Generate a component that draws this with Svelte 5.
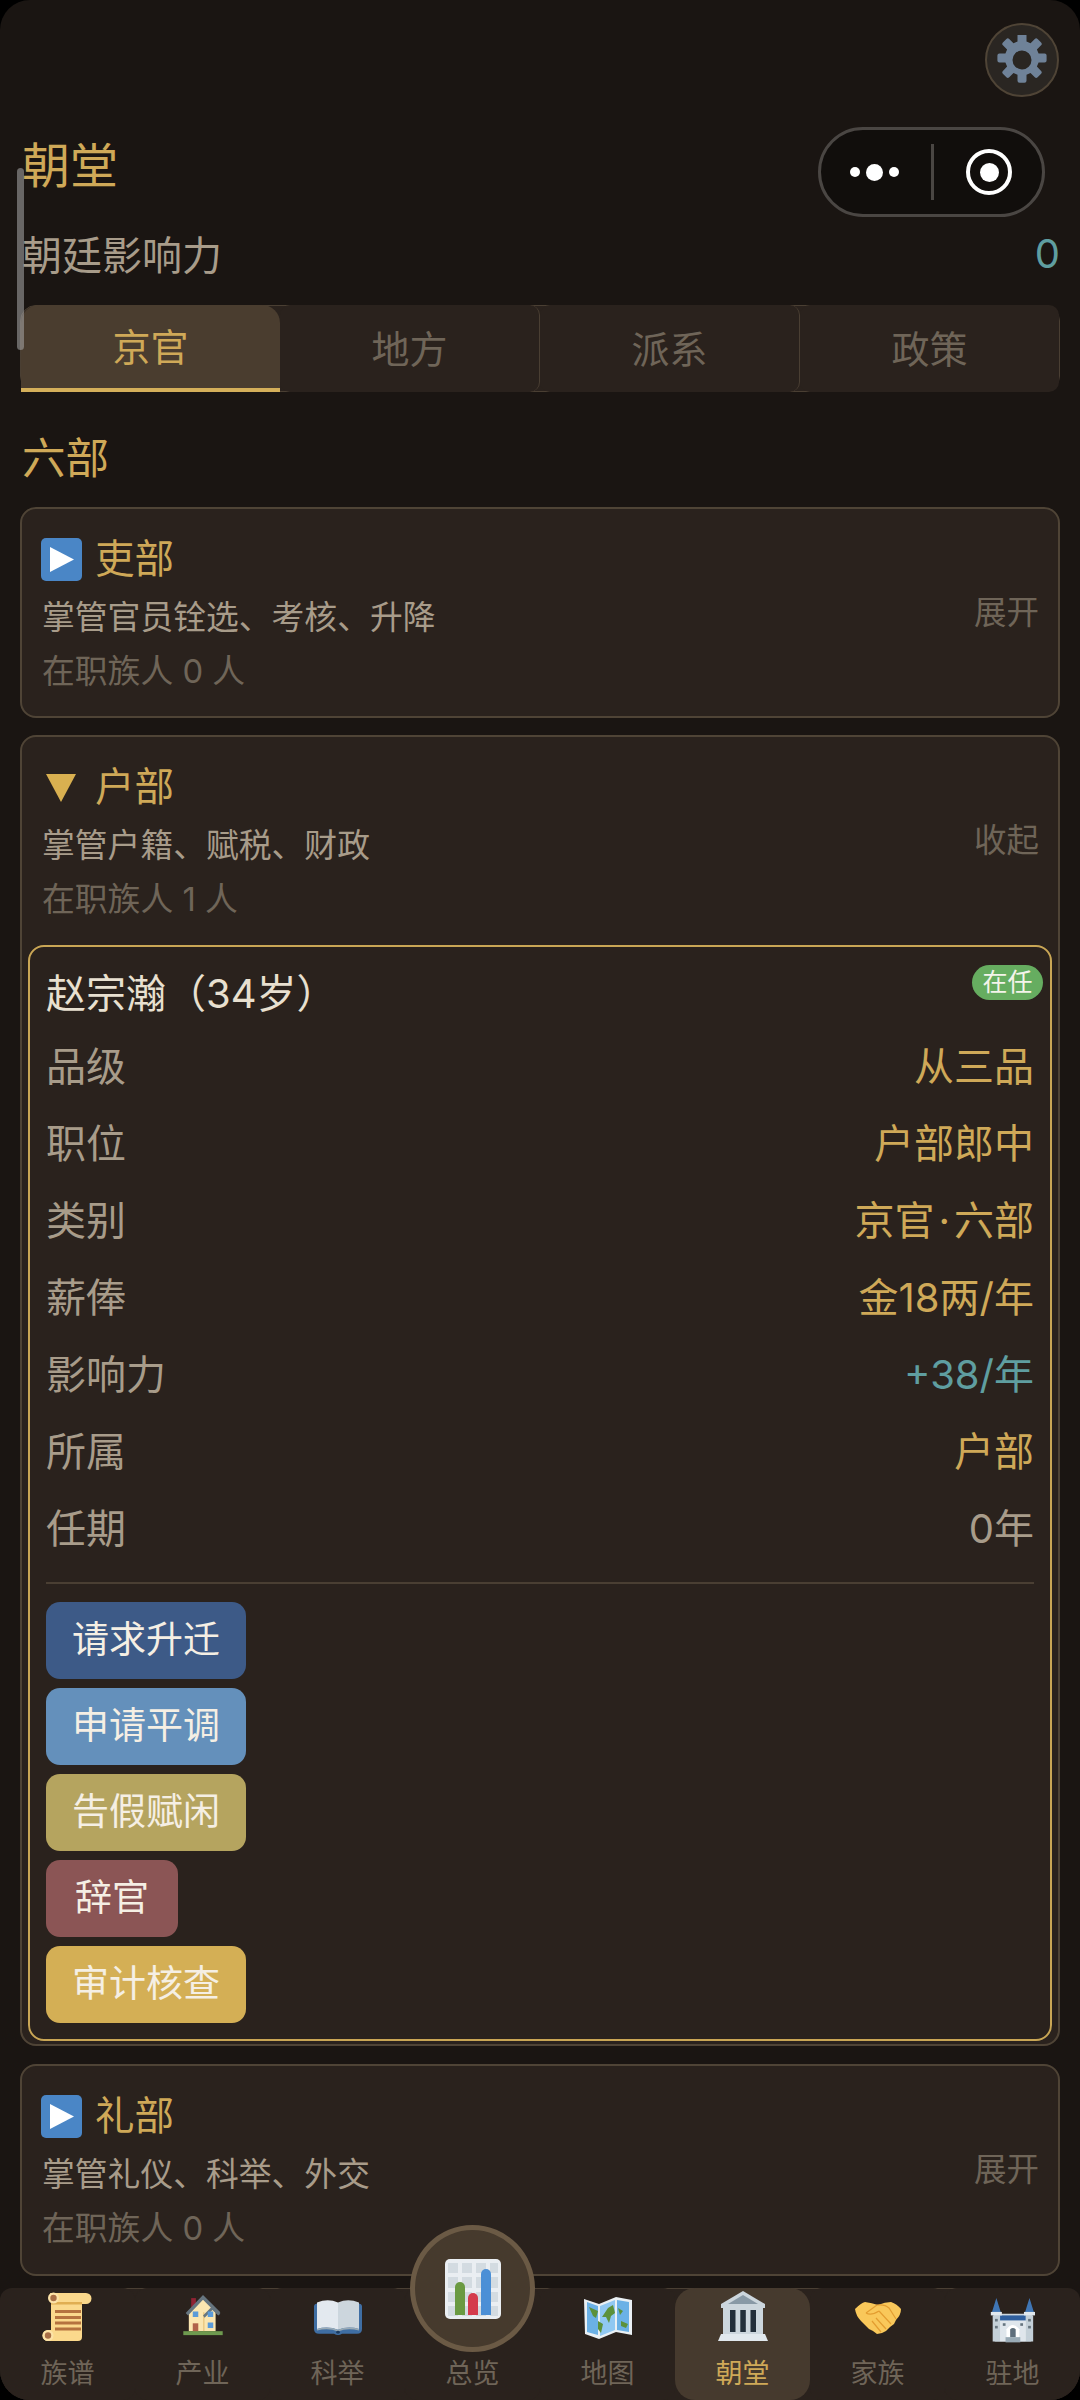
<script>
  const tabs = ['京官', '地方', '派系', '政策'];
  const rows = [
    { k: '品级', v: ['从三品'], c: 'gold' },
    { k: '职位', v: ['户部郎中'], c: 'gold' },
    { k: '类别', v: ['京官', '六部'], c: 'gold' },
    { k: '薪俸', v: ['金18两/年'], c: 'gold' },
    { k: '影响力', v: ['+38/年'], c: 'teal' },
    { k: '所属', v: ['户部'], c: 'gold' },
    { k: '任期', v: ['0年'], c: 'plain' }
  ];
  const actions = [
    { t: '请求升迁', c: 'navy' },
    { t: '申请平调', c: 'sky' },
    { t: '告假赋闲', c: 'olive' },
    { t: '辞官', c: 'wine short' },
    { t: '审计核查', c: 'amber' }
  ];
  const nav = [
    { t: '族谱', i: 'scroll' },
    { t: '产业', i: 'house' },
    { t: '科举', i: 'book' },
    { t: '总览', i: 'chart' },
    { t: '地图', i: 'map' },
    { t: '朝堂', i: 'bank' },
    { t: '家族', i: 'shake' },
    { t: '驻地', i: 'castle' }
  ];
</script>

{#snippet play()}
  <svg class="mark" viewBox="0 0 41 43"><rect width="41" height="43" rx="5" fill="#4a86c6" /><path d="M9 9 L33 21.5 L9 34 Z" fill="#fff" /></svg>
{/snippet}

{#snippet down()}
  <svg class="mark" viewBox="0 0 41 43"><path d="M5 8 H35 L20 36 Z" fill="#d9b050" /></svg>
{/snippet}

{#snippet icon(name)}
  {#if name === 'scroll'}
    <svg class="ni" viewBox="0 0 52 52">
      <path d="M8 2 H44 a5.500 5.500 0 0 1 0 11 H40 V46 a4 4 0 0 1 -4 4 H6 a5.500 5.500 0 0 1 0 -11 H9 V6 Z" fill="#fbd98c" />
      <rect x="9" y="11" width="31" height="2.500" fill="#e0ae52" />
      <circle cx="11.500" cy="7" r="5.500" fill="#fde3a7" /><circle cx="11.500" cy="7" r="3.200" fill="#a86f46" />
      <circle cx="6" cy="44.500" r="5.500" fill="#fde3a7" /><circle cx="6" cy="44.500" r="3.200" fill="#a86f46" />
      <g fill="#b5733f"><rect x="13" y="19" width="26" height="3" /><rect x="13" y="25" width="26" height="3" /><rect x="13" y="30.500" width="26" height="3" /><rect x="13" y="36.500" width="26" height="3" /></g>
    </svg>
  {:else if name === 'house'}
    <svg class="ni" viewBox="-7 -5 66 66">
      <rect x="11" y="4" width="6" height="12" fill="#8f2233" />
      <path d="M8 20 L26 3 L42 18 V46 H8 Z" fill="#fbe6b0" />
      <rect x="26" y="22" width="2" height="24" fill="#eccb86" />
      <path d="M4 23 L26 0 L48 22 L45 25 L26 6 L7 26 Z" fill="#66757f" />
      <path d="M26 26 L38 14 L48 24 L45.500 26 L38 19 L28 29 Z" fill="#66757f" />
      <rect x="13" y="21" width="7" height="7" fill="#5b9bd8" /><rect x="32" y="21" width="7" height="7" fill="#5b9bd8" /><rect x="32" y="35" width="7" height="7" fill="#5b9bd8" />
      <rect x="13" y="36" width="7" height="11" fill="#b0624a" />
      <rect x="1" y="46" width="50" height="5" fill="#6e9a4f" />
    </svg>
  {:else if name === 'book'}
    <svg class="ni" viewBox="0 0 52 52">
      <g transform="translate(0 6) scale(1 .8)">
        <path d="M2 12 Q2 8 6 8 H46 Q50 8 50 12 V40 Q50 46 45 46 H30 Q26 49 22 46 H7 Q2 46 2 40 Z" fill="#3f6ea3" />
        <path d="M5 7 Q16 1 26 7 V41 Q16 36 5 40 Z" fill="#e3e9ef" />
        <path d="M47 7 Q36 1 26 7 V41 Q36 36 47 40 Z" fill="#ccd6dd" />
        <path d="M5 40 Q16 36 26 41 L26 43 Q16 38 5 42 Z" fill="#99aab5" /><path d="M47 40 Q36 36 26 41 L26 43 Q36 38 47 42 Z" fill="#99aab5" />
        <circle cx="26" cy="44" r="1.800" fill="#1c3a5e" />
      </g>
    </svg>
  {:else if name === 'chart'}
    <svg class="nc" viewBox="0 0 56 60">
      <rect width="56" height="60" rx="5" fill="#eaeef2" />
      <g fill="#d3dbe1"><rect x="3" y="4" width="10" height="10" /><rect x="17" y="4" width="10" height="10" /><rect x="31" y="4" width="10" height="10" /><rect x="45" y="4" width="8" height="10" /><rect x="3" y="18" width="10" height="11" /><rect x="17" y="18" width="10" height="11" /><rect x="31" y="18" width="10" height="11" /><rect x="45" y="18" width="8" height="11" /><rect x="3" y="33" width="10" height="10" /><rect x="17" y="33" width="10" height="10" /><rect x="31" y="33" width="10" height="10" /><rect x="45" y="33" width="8" height="10" /><rect x="3" y="47" width="10" height="10" /><rect x="17" y="47" width="10" height="10" /><rect x="31" y="47" width="10" height="10" /><rect x="45" y="47" width="8" height="10" /></g>
      <path d="M10 56 V28 a5 5 0 0 1 10 0 V56 Z" fill="#6a9a42" />
      <path d="M23 56 V39 a5 5 0 0 1 10 0 V56 Z" fill="#d43b4c" />
      <path d="M36 56 V15 a5 5 0 0 1 10 0 V56 Z" fill="#4b8fd6" />
    </svg>
  {:else if name === 'map'}
    <svg class="ni" viewBox="0 0 52 52">
      <path d="M2 8 L17 13 L34 6 L50 9 V44 L34 41 L17 48 L3 43 Z" fill="#eaf0f4" />
      <path d="M5 11 L16 15 V44 L5 41 Z" fill="#6bb1e6" /><path d="M18 15 L33 9 V39 L18 45 Z" fill="#90c8f2" /><path d="M35 9 L47 11 V41 L35 39 Z" fill="#6bb1e6" />
      <path d="M7 16 L16 20 L14 27 L11 25 Z M16 30 L21 33 L19 42 L16 38 Z M20 26 L26 17 L31 14 L33 22 L29 25 L27 32 L24 26 Z M36 17 L41 20 L38 24 Z M39 30 L46 33 L44 37 L39 35 Z" fill="#5c913b" />
    </svg>
  {:else if name === 'bank'}
    <svg class="ni" viewBox="0 0 52 52">
      <path d="M26 0 L48 13 V17 H4 V13 Z" fill="#ccd6dd" /><path d="M26 4 L41 13 H11 Z" fill="#8899a6" />
      <rect x="6" y="17" width="40" height="26" fill="#ccd6dd" />
      <g fill="#232f3b"><rect x="13" y="19" width="5.500" height="22" /><rect x="23.300" y="19" width="5.500" height="22" /><rect x="33.500" y="19" width="5.500" height="22" /></g>
      <path d="M4 43 H48 L51 50 H1 Z" fill="#e1e8ed" />
    </svg>
  {:else if name === 'shake'}
    <svg class="ni" viewBox="0 0 52 52">
      <path d="M3 18 Q9 12 13 11 Q20 12 26 14 Q33 11 39 11 Q45 13 49 18 Q49 24 44 29 L42 33 L38 36 L34 40 L30 42 L25 43 L21 40 L17 38 L13 34 L9 30 Q4 25 3 18 Z" fill="#f9c85a" />
      <path d="M14 22 L25 14 Q33 13 37 17 L44 28 M27 20 L39 33 M24 27 L34 38 M20 30 L29 41 M14 22 Q19 25 27 20" fill="none" stroke="#e39d30" stroke-width="1.200" />
    </svg>
  {:else}
    <svg class="ni" viewBox="0 0 52 52">
      <g transform="translate(2 7) scale(.92 .87)">
        <rect x="5" y="18" width="42" height="32" rx="2" fill="#ccd6dd" />
        <rect x="12" y="20" width="28" height="6" fill="#2f5f9e" />
        <path d="M3 17 L8 0 L13 17 Z M39 17 L44 0 L49 17 Z" fill="#3f76b5" />
        <rect x="2" y="16" width="12" height="4" fill="#e1e8ed" /><rect x="38" y="16" width="12" height="4" fill="#e1e8ed" />
        <rect x="4" y="20" width="8" height="30" fill="#c4d0d8" /><rect x="40" y="20" width="8" height="30" fill="#c4d0d8" />
        <rect x="12" y="26" width="28" height="24" fill="#dfe6ec" />
        <path d="M19 50 V36 Q26 26 33 36 V50 Z" fill="#fff" /><path d="M23 45 V36 Q26 33 29 36 V45 Z" fill="#5f6f7c" />
        <rect x="18" y="45" width="16" height="6" fill="#99aab5" />
        <g fill="#66757f"><rect x="6.500" y="24" width="3" height="3" /><rect x="42.500" y="24" width="3" height="3" /><rect x="6.500" y="32" width="3" height="3" /><rect x="42.500" y="32" width="3" height="3" /><rect x="15" y="29" width="3" height="3" /><rect x="34" y="29" width="3" height="3" /></g>
      </g>
    </svg>
  {/if}
{/snippet}

{#snippet dept(name, desc, count, open, action)}
  <div class="head">
    <div class="info">
      <div class="dname">{#if open}{@render down()}{:else}{@render play()}{/if}<span>{name}</span></div>
      <div class="desc">{desc}</div>
      <div class="count">在职族人 {count} 人</div>
    </div>
    <div class="toggle">{action}</div>
  </div>
{/snippet}

<div class="screen">
  <main class="page">
    <h1>朝堂</h1>
    <div class="power"><span>朝廷影响力</span><b>0</b></div>
    <div class="tabs">
      {#each tabs as t, i}
        <div class="tab" class:on={i === 0}><span>{t}</span></div>
      {/each}
    </div>
    <h2>六部</h2>

    <section class="card">
      {@render dept('吏部', '掌管官员铨选、考核、升降', 0, false, '展开')}
    </section>

    <section class="card open">
      {@render dept('户部', '掌管户籍、赋税、财政', 1, true, '收起')}
      <div class="person">
        <div class="pname">赵宗瀚（34岁）</div>
        <span class="chip">在任</span>
        {#each rows as r}
          <div class="row"><span>{r.k}</span><span class={r.c}>{#each r.v as part, i}{#if i > 0}<span class="dot">·</span>{/if}{part}{/each}</span></div>
        {/each}
        <div class="acts">
          {#each actions as a}
            <div class="act {a.c}">{a.t}</div>
          {/each}
        </div>
      </div>
    </section>

    <section class="card last">
      {@render dept('礼部', '掌管礼仪、科举、外交', 0, false, '展开')}
    </section>
  </main>

  <div class="thumb"></div>

  <button class="gear" aria-label="设置">
    <svg viewBox="0 0 50 50" width="50" height="50">
      <path fill="#6f8298" fill-rule="evenodd" d="M20.500 0.500 a2 2 0 0 1 2 -2 h5 a2 2 0 0 1 2 2 v6 l4 1.700 4.300 -4.200 a2 2 0 0 1 2.800 0 l3.500 3.500 a2 2 0 0 1 0 2.800 l-4.200 4.300 1.700 4 h6 a2 2 0 0 1 2 2 v5 a2 2 0 0 1 -2 2 h-6 l-1.700 4 4.200 4.300 a2 2 0 0 1 0 2.800 l-3.500 3.500 a2 2 0 0 1 -2.800 0 l-4.300 -4.200 -4 1.700 v6 a2 2 0 0 1 -2 2 h-5 a2 2 0 0 1 -2 -2 v-6 l-4 -1.700 -4.300 4.200 a2 2 0 0 1 -2.800 0 l-3.500 -3.500 a2 2 0 0 1 0 -2.800 l4.200 -4.300 -1.700 -4 h-6 a2 2 0 0 1 -2 -2 v-5 a2 2 0 0 1 2 -2 h6 l1.700 -4 -4.200 -4.300 a2 2 0 0 1 0 -2.800 l3.500 -3.500 a2 2 0 0 1 2.800 0 l4.300 4.200 4 -1.700 Z M25 15.500 a9.500 9.500 0 1 0 0 19 a9.500 9.500 0 1 0 0 -19 Z" />
    </svg>
  </button>

  <div class="capsule">
    <div class="dots"><i></i><i class="big"></i><i></i></div>
    <div class="sep"></div>
    <div class="target"><i></i></div>
  </div>

  <nav>
    {#each nav as n}
      <div class="item" class:on={n.t === '朝堂'} class:mid={n.t === '总览'}>
        {#if n.t === '总览'}
          <div class="bubble">{@render icon(n.i)}</div>
          <div class="slot"></div>
        {:else}
          <div class="slot">{@render icon(n.i)}</div>
        {/if}
        <span>{n.t}</span>
      </div>
    {/each}
  </nav>
</div>

<style>
  :global(body) { margin: 0; background: #000; }
  .screen {
    position: relative;
    width: 1080px;
    height: 2400px;
    overflow: hidden;
    border-radius: 30px;
    background: #1a1512;
    font-family: Inter, "Noto Sans CJK SC", "Noto Sans", sans-serif;
    color: #a89c8a;
  }
  .page { padding: 131px 20px 0; }
  h1 { margin: 0 0 0 2px; font-size: 48px; line-height: 70px; font-weight: 400; color: #cfa958; }
  .power { display: flex; justify-content: space-between; align-items: center; height: 60px; margin-top: 22px; font-size: 40px; color: #a89c8a; }
  .power span { margin-left: 2px; }
  .power b { font-weight: 400; color: #5f9ea0; }
  .tabs { display: flex; height: 87px; margin-top: 22px; box-sizing: border-box; border: 1px solid #4a3f33; border-radius: 16px; background: #2a221d; }
  .tab { flex: 1; display: flex; align-items: center; justify-content: center; margin: -1px 0; background: #2a221d; border-radius: 10px; font-size: 38px; color: #6f6558; border-right: 1px solid #4a3f33; box-sizing: border-box; }
  .tab span { padding-bottom: 5px; }
  .tab:last-child { border-right: 0; }
  .tab.on { background: #4a3d2f; color: #cfa958; border-bottom: 4px solid #d4af5a; border-radius: 18px 18px 0 0; border-right: 0; }
  h2 { margin: 36px 0 0 2px; font-size: 43.500px; line-height: 60px; font-weight: 400; color: #cfa958; }
  .card { box-sizing: border-box; margin-top: 19px; height: 211px; background: #2a221d; border: 2px solid #4f4436; border-radius: 16px; }
  .card.open { height: 1311px; margin-top: 17px; }
  .card.last { height: 212px; margin-top: 18px; }
  .head { display: flex; justify-content: space-between; padding: 0 19px; }
  .info { padding-top: 28px; }
  .dname { display: flex; align-items: center; height: 44px; font-size: 39.500px; color: #cfa958; gap: 13px; }
  .dname span { line-height: 44px; }
  .mark { width: 41px; height: 43px; flex: none; }
  .desc { margin-top: 13px; margin-left: 1px; font-size: 32.800px; line-height: 46px; color: #a89c8a; }
  .count { margin-top: 8px; margin-left: 1px; font-size: 32.800px; line-height: 46px; color: #6f6558; }
  .toggle { margin-top: 81px; font-size: 32.500px; line-height: 46px; color: #6f6558; }
  .person { position: relative; box-sizing: border-box; height: 1096px; margin: 23px 6px 0; padding: 19px 16px 0; border: 2px solid #c9a655; border-radius: 16px; }
  .pname { font-size: 40px; line-height: 56px; color: #e8e0d0; margin-bottom: 3px; }
  .chip { position: absolute; right: 7px; top: 18px; width: 71px; height: 35px; border-radius: 18px; background: #66ad60; color: #f4f4ea; font-size: 25px; line-height: 35px; text-align: center; }
  .row { display: flex; justify-content: space-between; align-items: center; height: 77px; font-size: 40px; color: #a89c8a; }
  .dot { margin: 0 4px; }
  .gold { color: #cfa958; }
  .teal { color: #5f9ea0; }
  .plain { color: #a89c8a; }
  .acts { display: flex; flex-direction: column; align-items: flex-start; gap: 9px; margin-top: 18px; padding-top: 18px; border-top: 2px solid #4a3f33; }
  .act { width: 200px; height: 77px; border-radius: 14px; font-size: 37px; line-height: 76px; text-align: center; color: #f5efe4; }
  .act.short { width: 132px; }
  .navy { background: #3d5a87; }
  .sky { background: #6490bb; }
  .olive { background: #b5a45f; }
  .wine { background: #8b5555; }
  .amber { background: #d4af55; }
  .thumb { position: absolute; left: 17px; top: 168px; width: 7px; height: 182px; border-radius: 4px; background: rgba(170, 170, 170, .55); }
  .gear { position: absolute; left: 985px; top: 23px; width: 74px; height: 74px; padding: 0; box-sizing: border-box; border: 2px solid #4f4436; border-radius: 50%; background: #2a2622; display: flex; align-items: center; justify-content: center; }
  .capsule { position: absolute; left: 818px; top: 127px; width: 227px; height: 90px; box-sizing: border-box; border: 3px solid #4a4643; border-radius: 45px; background: #110e0c; }
  .dots { position: absolute; left: 29px; top: 0; bottom: 0; display: flex; align-items: center; gap: 6px; }
  .dots i { width: 10px; height: 10px; border-radius: 50%; background: #fff; }
  .dots i.big { width: 17px; height: 17px; }
  .sep { position: absolute; left: 110px; top: 14px; width: 3px; height: 56px; background: #4a4643; }
  .target { position: absolute; left: 145px; top: 19px; width: 46px; height: 46px; box-sizing: border-box; border: 4px solid #fff; border-radius: 50%; display: flex; align-items: center; justify-content: center; }
  .target i { width: 19px; height: 19px; border-radius: 50%; background: #fff; }
  nav { position: absolute; left: 0; right: 0; bottom: 0; height: 112px; display: flex; box-sizing: border-box; border-top: 1px solid #4a3f33; border-radius: 24px 24px 0 0; background: #2a221d; }
  .item { position: relative; flex: 1; margin-top: -1px; display: flex; flex-direction: column; align-items: center; background: #2a221d; border-radius: 12px; }
  .item.on { background: #463a2e; border-radius: 20px; }
  .item span { margin-top: 11px; font-size: 27px; line-height: 40px; color: #6f6558; }
  .item.on span { color: #cfa958; }
  .slot { height: 52px; margin-top: 3px; display: flex; align-items: center; justify-content: center; }
  .ni { width: 52px; height: 52px; }
  .nc { width: 56px; height: 60px; }
  .bubble { position: absolute; left: 5px; top: -63px; width: 125px; height: 127px; box-sizing: border-box; border: 5px solid #6b5a45; border-radius: 50%; background: #463a2d; display: flex; align-items: center; justify-content: center; }
</style>
